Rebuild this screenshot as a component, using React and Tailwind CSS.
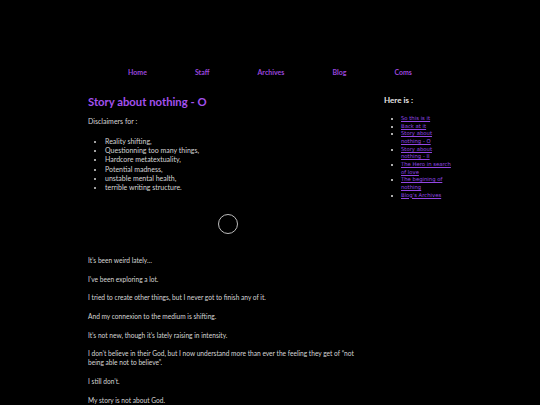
import React from "react";

const navItems = ["Home", "Staff", "Archives", "Blog", "Coms"];

const disclaimers = [
  "Reality shifting,",
  "Questionning too many things,",
  "Hardcore metatextuality,",
  "Potential madness,",
  "unstable mental health,",
  "terrible writing structure.",
];

const links = [
  "So this is it",
  "Back at it",
  "Story about nothing - O",
  "Story about nothing - II",
  "The Hero in search of love",
  "The begining of nothing",
  "Blog's Archives",
];

const paragraphs = [
  "It’s been weird lately…",
  "I’ve been exploring a lot.",
  "I tried to create other things, but I never got to finish any of it.",
  "And my connexion to the medium is shifting.",
  "It’s not new, though it’s lately raising in intensity.",
  "I don’t believe in their God, but I now understand more than ever the feeling they get of “not being able not to believe”.",
  "I still don’t.",
  "My story is not about God.",
];

export default function App() {
  return (
    <div
      className="w-[540px] h-[405px] overflow-hidden bg-black text-[#d6d6d6]"
      style={{ fontFamily: "Lato, 'Noto Sans', sans-serif" }}
    >
      {/* Nav */}
      <nav className="pt-[67px] flex justify-center">
        <ul className="w-[332px] flex justify-around text-[7px] leading-[10px] font-bold text-[#9a46dc]">
          {navItems.map((n) => (
            <li key={n}>{n}</li>
          ))}
        </ul>
      </nav>

      <div className="flex pl-[88px] pt-[17px] gap-[16px]">
        {/* Main */}
        <main className="w-[280px] shrink-0">
          <h1 className="text-[11.3px] leading-[15px] font-bold text-[#a451ee]">
            Story about nothing - O
          </h1>
          <p className="mt-[7px] text-[7px] leading-[10px]">Disclaimers for :</p>
          <ul className="mt-[11px] pl-[17px] list-disc text-[7px] leading-[9.2px]">
            {disclaimers.map((d) => (
              <li key={d}>{d}</li>
            ))}
          </ul>

          <div className="flex justify-center mt-[22px]">
            <div className="w-[20px] h-[20px] rounded-full border border-[#bdbdbd]" />
          </div>

          <div className="mt-[22px] w-[283px] text-[6.6px] leading-[9.3px] flex flex-col gap-[9.3px]">
            {paragraphs.map((p) => (
              <p key={p}>{p}</p>
            ))}
          </div>
        </main>

        {/* Sidebar */}
        <aside className="w-[68.5px]">
          <h2 className="text-[8px] leading-[12px] font-bold text-[#e6e6e6]">Here is :</h2>
          <ul
            className="mt-[9px] pl-[17px] list-disc text-[5.3px] leading-[7.65px]"
            style={{ fontFamily: "'DejaVu Sans', Verdana, sans-serif" }}
          >
            {links.map((l) => (
              <li key={l} className="text-[#e6e6e6]">
                <a className="underline text-[#9447e4]">{l}</a>
              </li>
            ))}
          </ul>
        </aside>
      </div>
    </div>
  );
}
